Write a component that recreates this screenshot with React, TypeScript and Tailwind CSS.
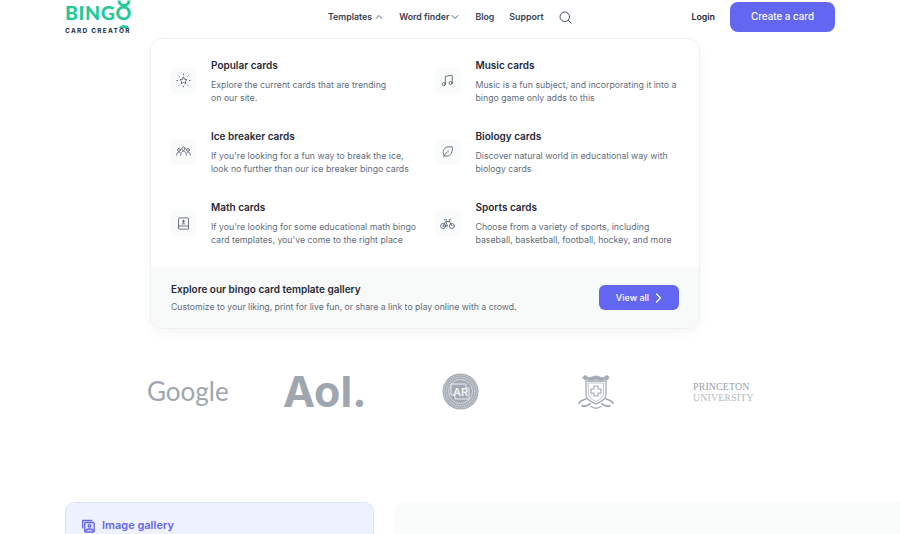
import React from "react";

const font = { fontFamily: "Inter, sans-serif" };

function Ico({ children, size = 15 }: { children: React.ReactNode; size?: number }) {
  return (
    <svg width={size} height={size} viewBox="0 0 24 24" fill="none" stroke="currentColor" strokeWidth={1.4} strokeLinecap="round" strokeLinejoin="round">
      {children}
    </svg>
  );
}

const icons: Record<string, React.ReactNode> = {
  star: (
    <>
      <path d="M12 6.500l1.800 3.500 3.900.5-2.800 2.700.7 3.900-3.600-1.800-3.600 1.800.7-3.900-2.800-2.700 3.900-.5z" />
      <path d="M12 1.500v1.200M4.500 4.500l.8.8M19.500 4.500l-.8.8M1.500 12h1.200M21.300 12h1.200M4.500 20l.8-.8M19.500 20l-.8-.8M12 21v1.200" />
    </>
  ),
  users: (
    <>
      <circle cx="12" cy="7.500" r="2.700" />
      <path d="M7.500 18c0-3.800 1.800-6.500 4.500-6.500s4.500 2.700 4.500 6.500" />
      <circle cx="4.800" cy="9.500" r="2.300" />
      <path d="M1 18c0-3 1.300-5 3.800-5 .6 0 1.100.1 1.500.4" />
      <circle cx="19.200" cy="9.500" r="2.300" />
      <path d="M23 18c0-3-1.300-5-3.800-5-.6 0-1.100.1-1.500.4" />
    </>
  ),
  book: (
    <>
      <path d="M4 19V5a2 2 0 0 1 2-2h12a2 2 0 0 1 2 2v16H6.500A2.500 2.500 0 0 1 4 18.500 2.500 2.500 0 0 1 6.500 16H20" />
      <path d="M12 6.500v4M10 8.500h4M10 12.500h4" />
    </>
  ),
  music: (
    <>
      <path d="M8.500 18V5.500l11-2V16" />
      <circle cx="6" cy="18" r="2.500" />
      <circle cx="17" cy="16" r="2.500" />
    </>
  ),
  leaf: (
    <>
      <path d="M6 20.500c.6-1.200.4-2.500-.5-4.500C3.500 11 7.500 4.500 13 4.500h6.500c.8 6-.5 11-4 13.500-2.800 2-5.800 1.800-8 .5" />
      <path d="M7.500 18.500c1-3 3-5.500 6-7" />
    </>
  ),
  bike: (
    <>
      <circle cx="5" cy="16" r="4" />
      <circle cx="19" cy="16" r="4" />
      <path d="M5 16l4-7h6.500L19 16M9 9l3 7H5M7 6h3.500M15.500 9L14.500 6H17" />
    </>
  ),
};

const items = [
  { i: "star", t: "Popular cards", a: "Explore the current cards that are trending", b: "on our site." },
  { i: "music", t: "Music cards", a: "Music is a fun subject, and incorporating it into a", b: "bingo game only adds to this" },
  { i: "users", t: "Ice breaker cards", a: "If you're looking for a fun way to break the ice,", b: "look no further than our ice breaker bingo cards" },
  { i: "leaf", t: "Biology cards", a: "Discover natural world in educational way with", b: "biology cards" },
  { i: "book", t: "Math cards", a: "If you're looking for some educational math bingo", b: "card templates, you've come to the right place" },
  { i: "bike", t: "Sports cards", a: "Choose from a variety of sports, including", b: "baseball, basketball, football, hockey, and more" },
];

function Item({ i, t, a, b }: { i: string; t: string; a: string; b: string }) {
  return (
    <div className="flex items-center h-[71.300px]">
      <div className="w-[26px] h-[26px] rounded-[6px] bg-[#f9fbfb] text-[#596270] flex items-center justify-center shrink-0">
        <Ico>{icons[i]}</Ico>
      </div>
      <div className="ml-[15px]">
        <div className="text-[10px] leading-[16px] font-semibold text-[#1f2937]">{t}</div>
        <div className="mt-[6px] text-[8.750px] leading-[13px] text-[#626c7b] whitespace-nowrap">
          <div>{a}</div>
          <div>{b}</div>
        </div>
      </div>
    </div>
  );
}

function Logo() {
  return (
    <div className="relative w-[65px] h-[34px] mt-[2px]">
      <div className="absolute left-0 top-[-1px] text-[#22c997] text-[19.500px] leading-[24px] font-black tracking-[0.600px] whitespace-nowrap" style={{ fontFamily: "Lato, sans-serif" }}>
        BINGO
      </div>
      <svg className="absolute left-[52px] top-[-4px]" width="14" height="30" viewBox="0 0 14 30" fill="none" stroke="#22c997" strokeWidth="3">
        <path d="M2 2.500a5 5 0 0 0 10 0" />
        <path d="M2 33.500a5 5 0 0 1 10 0" />
      </svg>
      <div className="absolute left-0 top-[24px] text-[#1f2937] text-[6.500px] leading-[10px] font-bold tracking-[1.250px] whitespace-nowrap">CARD CREATOR</div>
    </div>
  );
}

function Dropdown() {
  return (
    <div className="absolute left-[150px] top-[38px] w-[550px] h-[291px] bg-white border border-[#eef1f3] rounded-[12px] shadow-[0_4px_12px_rgba(15,23,42,0.04)] overflow-hidden flex flex-col">
      <div className="grid grid-cols-[264.500px_1fr] content-start pl-[19px] pt-[6px] h-[228px]">
        {items.map((x) => (
          <Item key={x.t} {...x} />
        ))}
      </div>
      <div className="flex-1 bg-[#f8fafa] flex items-center justify-between pl-[20px] pr-[20px]">
        <div>
          <div className="text-[10px] leading-[16px] font-semibold text-[#1f2937]">Explore our bingo card template gallery</div>
          <div className="mt-[4px] text-[8.700px] leading-[13px] text-[#626c7b]">Customize to your liking, print for live fun, or share a link to play online with a crowd.</div>
        </div>
        <div className="w-[80px] h-[25px] rounded-[6px] bg-[#6366f1] text-white text-[9px] font-medium flex items-center justify-center gap-[6px]">
          View all
          <svg width="7" height="10" viewBox="0 0 7 10" fill="none" stroke="white" strokeWidth="1.200" strokeLinecap="round" strokeLinejoin="round">
            <path d="M1.500 1l4 4-4 4" />
          </svg>
        </div>
      </div>
    </div>
  );
}

function Chev({ up }: { up?: boolean }) {
  return (
    <svg width="8" height="6" viewBox="0 0 8 6" fill="none" stroke="#4b5563" strokeWidth="0.900" strokeLinecap="round" strokeLinejoin="round">
      <path d={up ? "M1 4.500L4 1.500l3 3" : "M1 1.500l3 3 3-3"} />
    </svg>
  );
}

function Crest() {
  return (
    <svg width="36" height="36" viewBox="0 0 36 36" fill="none" stroke="#a3a9b3" strokeLinecap="round" strokeLinejoin="round">
      <path d="M5 5c1-3 3-3 4-1 3 2 6-1 9-1s6 3 9 1c1-2 3-2 4 1-1 2-3 2-4 1-3 2-7 1-9 0-2 1-6 2-9 0-1 1-3 1-4-1z" fill="#a3a9b3" strokeWidth="0.800" />
      <path d="M8 8h20v14c0 5-6 7-10 9-4-2-10-4-10-9z" strokeWidth="1.300" />
      <path d="M10.500 10h15v11.500c0 3.500-4.500 5.500-7.500 7-3-1.500-7.500-3.500-7.500-7z" strokeWidth="0.700" />
      <path d="M16 13h4v3h3v4h-3v3h-4v-3h-3v-4h3z" strokeWidth="1.200" />
      <path d="M1 30c2-3 4-3 7-4M35 30c-2-3-4-3-7-4M4 33c3 1 6-1 8-2M32 33c-3 1-6-1-8-2" strokeWidth="1.800" />
      <path d="M13 33.500c3 2 7 2 10 0" strokeWidth="1.500" />
    </svg>
  );
}

function ArSeal() {
  return (
    <svg width="37" height="37" viewBox="0 0 37 37">
      <circle cx="18.500" cy="18.500" r="18" fill="#a3a9b3" />
      <circle cx="18.500" cy="18.500" r="16.500" fill="none" stroke="#e5e7eb" strokeWidth="0.500" />
      <circle cx="18.500" cy="18.500" r="12" fill="none" stroke="#eef0f2" strokeWidth="0.700" />
      <circle cx="18.500" cy="18.500" r="14.300" fill="none" stroke="#d7dade" strokeWidth="1.600" strokeDasharray="1 1" />
      <path d="M9 11h15v4h3v11H13v-4H9z" fill="#a3a9b3" stroke="#eef0f2" strokeWidth="1" />
      <text x="18.500" y="23" textAnchor="middle" fontSize="11" fontWeight="600" fill="#f3f4f6" fontFamily="Inter, sans-serif">AR</text>
    </svg>
  );
}

export default function App() {
  return (
    <div className="relative w-[900px] h-[534px] bg-white overflow-hidden" style={font}>
      <header className="h-[34px] px-[65px] flex items-start">
        <Logo />
        <nav className="ml-[198px] h-[34px] flex items-center text-[8.800px] font-semibold text-[#374151]">
          <span className="flex items-center gap-[3px]">Templates<Chev up /></span>
          <span className="flex items-center gap-[2px] ml-[16px]">Word finder<Chev /></span>
          <span className="ml-[16px]">Blog</span>
          <span className="ml-[15px]">Support</span>
          <span className="ml-[15px] text-[#4b5563]">
            <svg width="13" height="13" viewBox="0 0 13 13" fill="none" stroke="currentColor" strokeWidth="1" strokeLinecap="round">
              <circle cx="5.800" cy="5.800" r="4.800" />
              <path d="M9.300 9.300L12 12" />
            </svg>
          </span>
        </nav>
        <div className="ml-auto flex items-center h-[34px]">
          <span className="text-[8.800px] font-semibold text-[#1f2937]">Login</span>
          <div className="ml-[15px] w-[105px] h-[30px] rounded-[8px] bg-[#6366f1] text-white text-[9.800px] font-medium flex items-center justify-center">
            Create a card
          </div>
        </div>
      </header>
      <Dropdown />
      <section className="mt-[335px] h-[44px] pl-[147px] flex items-center text-[#a0a6b0]">
        <span className="w-[136px] text-[26px] leading-none" style={{ fontFamily: "Lato, sans-serif" }}>Google</span>
        <span className="w-[159px] text-[43px] leading-none font-bold text-[#a0a6b0]">Aol.</span>
        <span className="w-[136px]"><ArSeal /></span>
        <span className="w-[115px]"><Crest /></span>
        <span className="mt-[1px] text-[9.800px] leading-[11px] tracking-[0.200px]" style={{ fontFamily: "Liberation Serif, serif" }}>
          <div className="text-[#969ca6]">PRINCETON</div>
          <div className="text-[#b4b9c1]">UNIVERSITY</div>
        </span>
      </section>
      <section className="mt-[89px] pl-[65px] flex gap-[20px]">
        <div className="w-[309px] h-[60px] bg-[#eef2ff] border border-dotted border-[#c7d2fe] rounded-[10px] pl-[16px] pt-[14px] flex items-start gap-[7px] text-[#6366f1]">
          <svg width="13" height="14" viewBox="0 0 13 14" fill="none" stroke="currentColor" strokeWidth="1.300" strokeLinejoin="round" className="mt-[2px]">
            <path d="M.7 9.500V1.500h9.500" />
            <rect x="2.700" y="3.500" width="9.500" height="9.500" rx="1" fill="#dfe3ff" />
            <circle cx="7.500" cy="6.800" r="1.200" />
            <path d="M3 12.500c1-2 2.500-2.500 4.500-2.500s3.500.5 4.500 2.500" />
          </svg>
          <span className="text-[11px] leading-[16px] font-semibold">Image gallery</span>
        </div>
        <div className="flex-1 h-[60px] bg-[#fafbfb] rounded-l-[10px]" />
      </section>
    </div>
  );
}
